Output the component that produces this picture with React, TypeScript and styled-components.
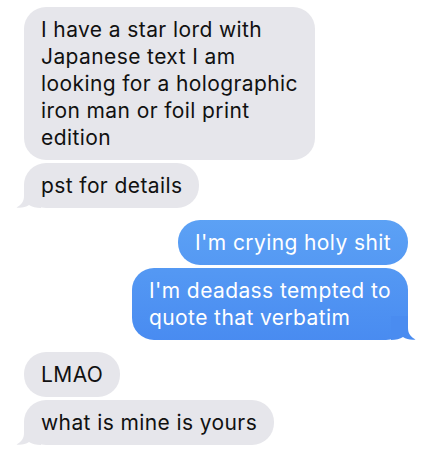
import React from "react";
import styled, { createGlobalStyle } from "styled-components";

const GlobalStyle = createGlobalStyle`
  html, body {
    margin: 0;
    padding: 0;
    background: #ffffff;
  }
  body {
    font-family: Inter, "Liberation Sans", Arial, sans-serif;
    -webkit-font-smoothing: antialiased;
  }
`;

type Side = "in" | "out";

const BLUE_TAIL = "#4a8cf0";
const GRAY = "#e6e6eb";

const Thread = styled.div`
  display: flex;
  flex-direction: column;
  gap: 12px;
  padding: 7px 31px 8px 24px;
  width: 439px;
  box-sizing: border-box;
`;

const Group = styled.div<{ $side: Side }>`
  display: flex;
  flex-direction: column;
  gap: 3px;
  align-items: ${(p) => (p.$side === "out" ? "flex-end" : "flex-start")};
`;

const Bubble = styled.div<{ $side: Side }>`
  position: relative;
  box-sizing: border-box;
  padding: 9px 17px 9px 17px;
  border-radius: 22px;
  font-size: 21px;
  line-height: 27px;
  letter-spacing: 0.4px;
  white-space: nowrap;
  color: ${(p) => (p.$side === "out" ? "#ffffff" : "#111111")};
  background: ${(p) =>
    p.$side === "out"
      ? "linear-gradient(180deg, #62a8f6 40%, #4587f0 80%) fixed"
      : GRAY};
`;

const TailSvg = styled.svg<{ $side: Side }>`
  position: absolute;
  bottom: 0;
  width: 26px;
  height: 24px;
  ${(p) =>
    p.$side === "out"
      ? "right: -9px; transform: scaleX(-1);"
      : "left: -9px;"}
`;

const Tail: React.FC<{ side: Side }> = ({ side }) => (
  <TailSvg $side={side} viewBox="0 0 26 24" aria-hidden="true">
    <path
      d="M9 0 L9 12 C9 18 6 21 1.5 23.6 C6.5 24.2 10.5 23.2 14 21 C17 23 21 24 26 24 L26 0 Z"
      fill={side === "out" ? BLUE_TAIL : GRAY}
    />
  </TailSvg>
);

type Msg = { text: React.ReactNode; tail?: boolean };

const groups: { side: Side; msgs: Msg[] }[] = [
  {
    side: "in",
    msgs: [
      {
        text: (
          <>
            I have a star lord with
            <br />
            Japanese text I am
            <br />
            looking for a holographic
            <br />
            iron man or foil print
            <br />
            edition
          </>
        ),
      },
      { text: "pst for details", tail: true },
    ],
  },
  {
    side: "out",
    msgs: [
      { text: "I'm crying holy shit" },
      {
        text: (
          <>
            I'm deadass tempted to
            <br />
            quote that verbatim
          </>
        ),
        tail: true,
      },
    ],
  },
  {
    side: "in",
    msgs: [{ text: "LMAO" }, { text: "what is mine is yours", tail: true }],
  },
];

export default function App() {
  return (
    <>
      <GlobalStyle />
      <Thread>
        {groups.map((g, gi) => (
          <Group key={gi} $side={g.side}>
            {g.msgs.map((m, mi) => (
              <Bubble key={mi} $side={g.side}>
                {m.text}
                {m.tail && <Tail side={g.side} />}
              </Bubble>
            ))}
          </Group>
        ))}
      </Thread>
    </>
  );
}
